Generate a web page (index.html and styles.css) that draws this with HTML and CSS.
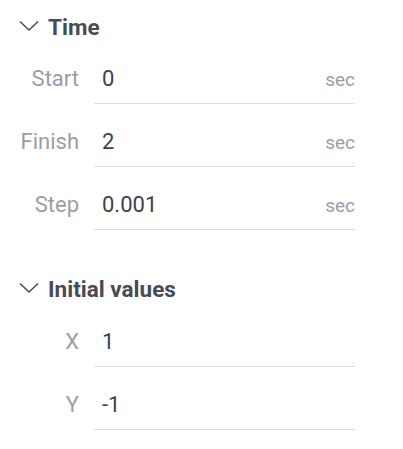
FILE: index.html
```html
<!DOCTYPE html>
<html>
<head>
<meta charset="utf-8">
<link rel="stylesheet" href="styles.css">
</head>
<body>
<div class="panel">
  <section class="group">
    <div class="group-head">
      <svg class="chev" width="20" height="12" viewBox="0 0 20 12"><path d="M1 1.5 L10 10 L19 1.5" fill="none" stroke="#4a4d58" stroke-width="1.6"/></svg>
      <span class="title">Time</span>
    </div>
    <div class="rows">
      <div class="row">
        <span class="label">Start</span>
        <div class="field"><span class="value">0</span><span class="unit">sec</span></div>
      </div>
      <div class="row">
        <span class="label">Finish</span>
        <div class="field"><span class="value">2</span><span class="unit">sec</span></div>
      </div>
      <div class="row">
        <span class="label">Step</span>
        <div class="field"><span class="value">0.001</span><span class="unit">sec</span></div>
      </div>
    </div>
  </section>
  <section class="group group-2">
    <div class="group-head">
      <svg class="chev" width="20" height="12" viewBox="0 0 20 12"><path d="M1 1.5 L10 10 L19 1.5" fill="none" stroke="#4a4d58" stroke-width="1.6"/></svg>
      <span class="title">Initial values</span>
    </div>
    <div class="rows">
      <div class="row">
        <span class="label">X</span>
        <div class="field"><span class="value">1</span></div>
      </div>
      <div class="row">
        <span class="label">Y</span>
        <div class="field"><span class="value">-1</span></div>
      </div>
    </div>
  </section>
</div>
</body>
</html>
```

FILE: styles.css
```css
html, body {
  margin: 0;
  padding: 0;
  background: #ffffff;
}
body {
  font-family: Roboto, "Noto Sans", sans-serif;
}
.panel {
  width: 403px;
  padding-top: 15px;
}
.group-head {
  display: flex;
  align-items: center;
  height: 24px;
  padding-left: 19px;
  gap: 9px;
}
.chev {
  display: block;
  margin-top: -2px;
}
.title {
  font-size: 22.5px;
  font-weight: 700;
  line-height: 24px;
  color: #484b56;
}
.group-2 {
  margin-top: 47px;
}
.rows {
  display: flex;
  flex-direction: column;
  gap: 23px;
  margin-top: 25px;
}
.group-2 .rows {
  margin-top: 26px;
}
.row {
  display: flex;
  align-items: flex-start;
}
.label {
  width: 79px;
  text-align: right;
  font-size: 22px;
  line-height: 30px;
  color: #9a9ea5;
  margin-right: 15px;
}
.field {
  width: 261px;
  display: flex;
  align-items: baseline;
  justify-content: space-between;
  border-bottom: 1px solid #dcdcdc;
  padding: 0 0 9px 8px;
  box-sizing: border-box;
}
.value {
  font-size: 22px;
  line-height: 30px;
  color: #3d4250;
}
.unit {
  font-size: 19px;
  color: #9a9ea5;
}
```
